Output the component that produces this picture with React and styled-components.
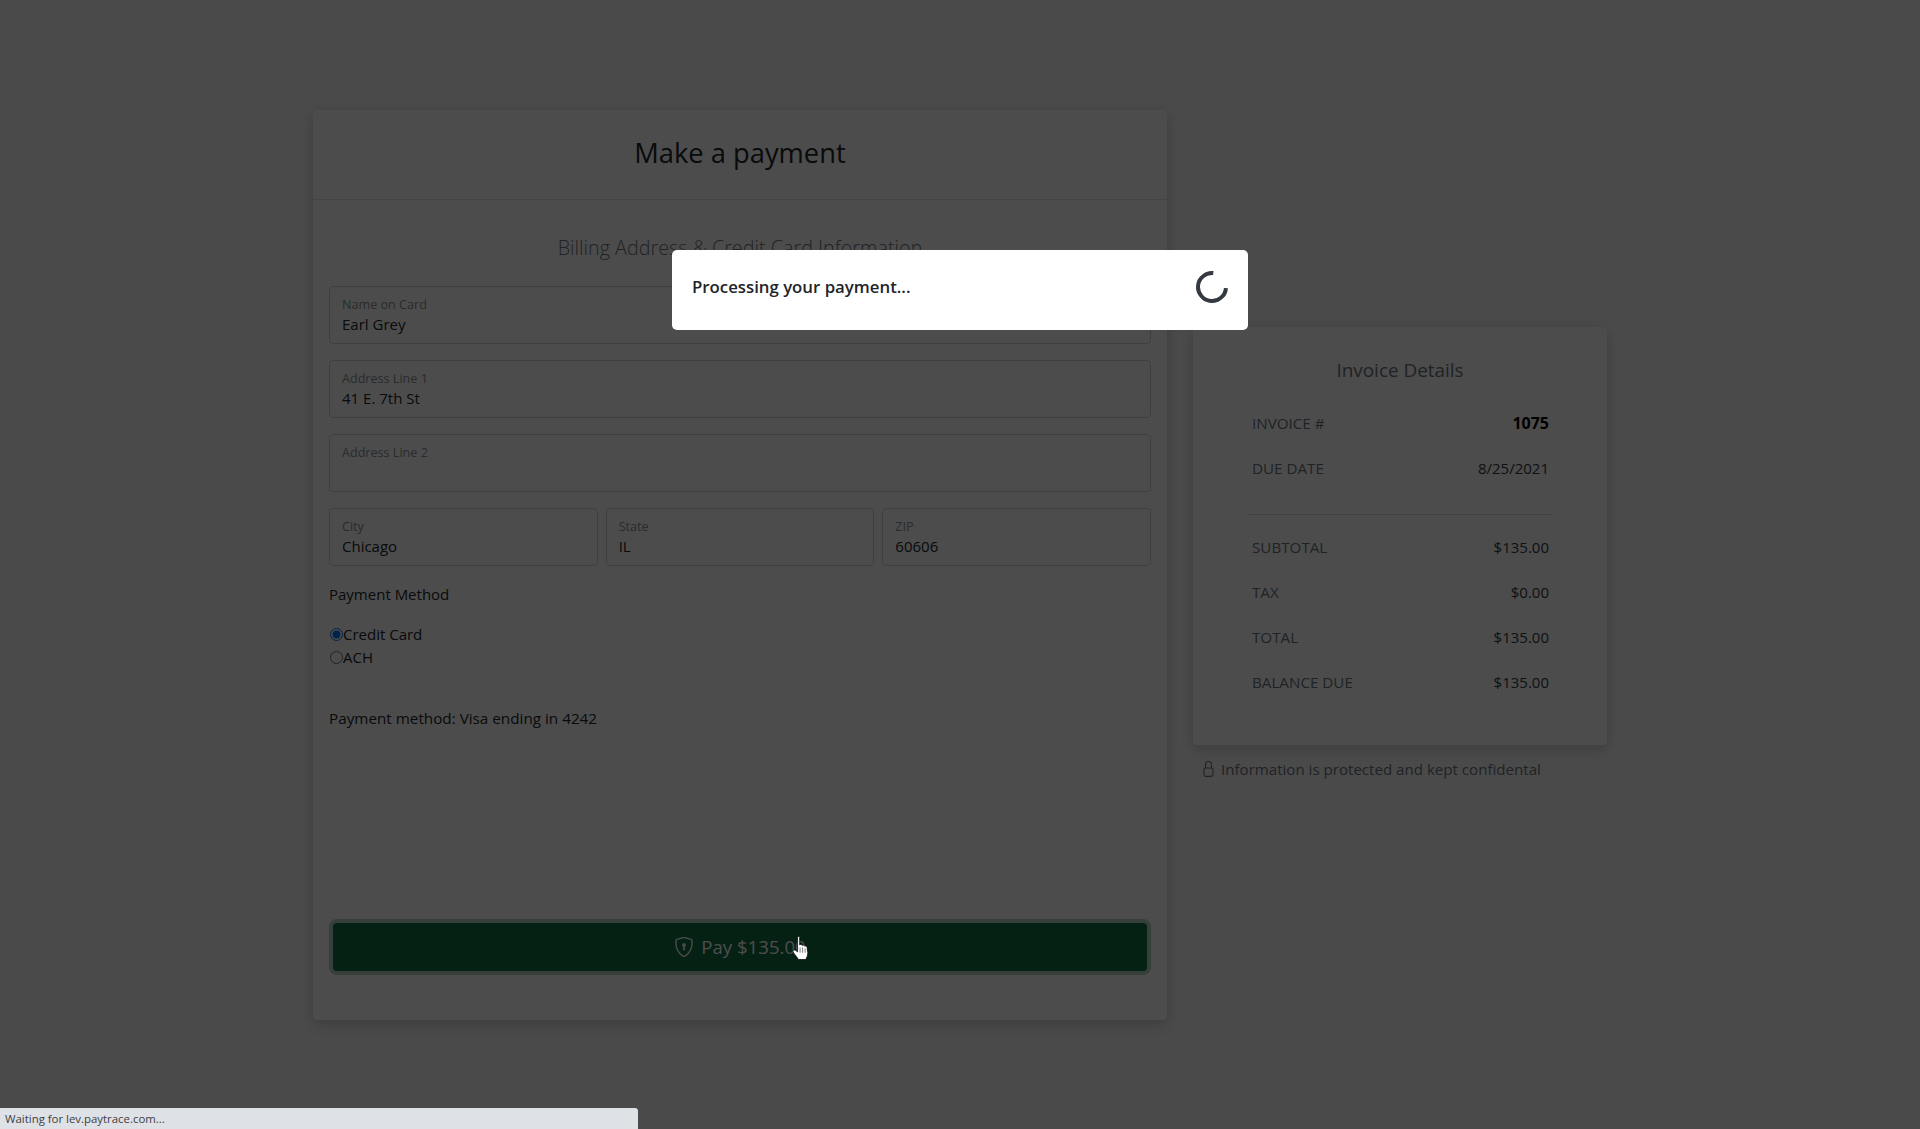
import React from "react";
import styled, { createGlobalStyle } from "styled-components";
import { BsShieldLock } from "react-icons/bs";

const GlobalStyle = createGlobalStyle`
  html, body {
    margin: 0;
    padding: 0;
    background: #f8f9fa;
    color: #212529;
    font-family: "Open Sans", "Liberation Sans", sans-serif;
  }
  * { box-sizing: border-box; }
`;

const LockIcon = () => (
  <svg width="11" height="17" viewBox="0 0 11 17" fill="none" stroke="currentColor" strokeWidth="1.1">
    <path d="M2.5 8V4.5a3 3 0 0 1 6 0V8" />
    <rect x="1" y="8" width="9" height="8.4" rx="1.6" />
  </svg>
);

const HandCursor = () => (
  <svg width="17" height="24" viewBox="0 0 16 23">
    <path
      d="M5.2 1.2C5.2.3 7.2.3 7.2 1.2V8.5C8 7.8 9.4 8 9.6 9c.8-.6 2.2-.3 2.4.8.9-.5 2.2-.1 2.3 1.2l.7 5c0 3-1.2 5-2 6.5H6c-1-2-3-4-5-7-.8-1.5.5-2.7 2-1.9l2.2 1.6z"
      fill="#fff"
      stroke="#000"
      strokeWidth="0.7"
    />
    <path d="M7.6 11v5M10 11v5M12.4 12v4" stroke="#000" strokeWidth="0.5" />
  </svg>
);

const Field = ({ label, value }) => (
  <FieldBox>
    <FieldLabel>{label}</FieldLabel>
    <FieldValue>{value}</FieldValue>
  </FieldBox>
);

const Row = ({ label, value, strong }) => (
  <InvoiceRow>
    <RowLabel>{label}</RowLabel>
    <RowValue $strong={strong}>{value}</RowValue>
  </InvoiceRow>
);

export default function App() {
  return (
    <>
      <GlobalStyle />
      <Page>
        <PaymentCard>
          <CardHeader>
            <Title>Make a payment</Title>
          </CardHeader>
          <CardBody>
            <SubTitle>Billing Address &amp; Credit Card Information</SubTitle>
            <Field label="Name on Card" value="Earl Grey" />
            <Field label="Address Line 1" value="41 E. 7th St" />
            <Field label="Address Line 2" value="" />
            <FieldRow>
              <Field label="City" value="Chicago" />
              <Field label="State" value="IL" />
              <Field label="ZIP" value="60606" />
            </FieldRow>
            <MethodHeading>Payment Method</MethodHeading>
            <RadioList>
              <RadioLabel>
                <RadioInput type="radio" name="method" defaultChecked />
                Credit Card
              </RadioLabel>
              <RadioLabel>
                <RadioInput type="radio" name="method" />
                ACH
              </RadioLabel>
            </RadioList>
            <MethodNote>Payment method: Visa ending in 4242</MethodNote>
            <PayButton type="button">
              <BsShieldLock size={20} />
              Pay $135.00
            </PayButton>
          </CardBody>
        </PaymentCard>

        <SideColumn>
          <InvoiceCard>
            <InvoiceTitle>Invoice Details</InvoiceTitle>
            <Row label="INVOICE #" value="1075" strong />
            <Row label="DUE DATE" value="8/25/2021" />
            <Divider />
            <Row label="SUBTOTAL" value="$135.00" />
            <Row label="TAX" value="$0.00" />
            <Row label="TOTAL" value="$135.00" />
            <Row label="BALANCE DUE" value="$135.00" />
          </InvoiceCard>
          <SecureNote>
            <LockIcon />
            Information is protected and kept confidental
          </SecureNote>
        </SideColumn>
      </Page>

      <Backdrop>
        <Dialog>
          <DialogText>Processing your payment...</DialogText>
          <Spinner />
        </Dialog>
      </Backdrop>

      <CursorSpot>
        <HandCursor />
      </CursorSpot>
      <StatusBar>Waiting for lev.paytrace.com...</StatusBar>
    </>
  );
}

const Page = styled.div`
  display: flex;
  justify-content: center;
  align-items: center;
  gap: 26px;
  height: 1129px;
  overflow: hidden;
`;

const PaymentCard = styled.section`
  width: 854px;
  background: #fff;
  border-radius: 4px;
  box-shadow: 0 0 14px rgba(0, 0, 0, 0.1), 0 8px 16px rgba(0, 0, 0, 0.1);
`;

const CardHeader = styled.header`
  height: 90px;
  padding-bottom: 4px;
  display: flex;
  align-items: center;
  justify-content: center;
  border-bottom: 1px solid #e0e0e0;
`;

const Title = styled.h1`
  margin: 0;
  font-size: 27.3px;
  font-weight: 500;
  color: #212529;
`;

const CardBody = styled.div`
  padding: 33px 16px 49px;
`;

const SubTitle = styled.h2`
  margin: 0 0 23px;
  font-size: 19.8px;
  font-weight: 300;
  line-height: 30px;
  text-align: center;
  color: #6c757d;
`;

const FieldBox = styled.div`
  flex: 1;
  height: 58px;
  margin-bottom: 16px;
  padding: 9px 12px 0;
  border: 1px solid #ced4da;
  border-radius: 4px;
  background: #fff;
`;

const FieldLabel = styled.div`
  font-size: 12.6px;
  line-height: 17px;
  color: #8c9196;
`;

const FieldValue = styled.div`
  height: 22px;
  font-size: 15px;
  line-height: 22px;
  color: #212529;
`;

const FieldRow = styled.div`
  display: flex;
  gap: 8px;
`;

const MethodHeading = styled.div`
  font-size: 15px;
  line-height: 24px;
`;

const RadioList = styled.div`
  margin-top: 17px;
`;

const RadioLabel = styled.label`
  display: flex;
  align-items: center;
  height: 23px;
  font-size: 15px;
`;

const RadioInput = styled.input`
  width: 13px;
  height: 13px;
  margin: 0 0 0 1px;
`;

const MethodNote = styled.p`
  margin: 37px 0 193px;
  font-size: 15.25px;
  line-height: 24px;
`;

const PayButton = styled.button`
  display: flex;
  align-items: center;
  justify-content: center;
  gap: 7px;
  width: calc(100% - 8px);
  height: 48px;
  margin: 0 4px;
  border: 0;
  border-radius: 4px;
  background: #126e43;
  box-shadow: 0 0 0 4px #b6d2c4;
  font-family: inherit;
  font-size: 18.6px;
  color: #fff;
`;

const SideColumn = styled.aside`
  width: 414px;
  padding-bottom: 22px;
`;

const InvoiceCard = styled.section`
  height: 418px;
  padding: 28px 54px 0;
  background: #fff;
  border-radius: 4px;
  box-shadow: 0 0 14px rgba(0, 0, 0, 0.1), 0 8px 16px rgba(0, 0, 0, 0.1);
`;

const InvoiceTitle = styled.h2`
  margin: 0 0 16px;
  font-size: 18.9px;
  font-weight: 400;
  line-height: 30px;
  text-align: center;
  color: #6c757d;
`;

const InvoiceRow = styled.div`
  display: flex;
  align-items: center;
  justify-content: space-between;
  height: 45px;
  padding: 0 4px 0 5px;
`;

const RowLabel = styled.span`
  font-size: 15.2px;
  color: #6c757d;
`;

const RowValue = styled.span`
  font-size: ${(p) => (p.$strong ? "16px" : "15px")};
  font-weight: ${(p) => (p.$strong ? 700 : 400)};
  color: ${(p) => (p.$strong ? "#000" : "#343a40")};
`;

const Divider = styled.hr`
  margin: 23px 0 10px;
  border: 0;
  border-top: 1px solid #dcdcdc;
`;

const SecureNote = styled.div`
  display: flex;
  align-items: center;
  gap: 7px;
  margin-top: 12px;
  padding-left: 10px;
  font-size: 15.1px;
  line-height: 24px;
  color: #6c757d;
`;

const Backdrop = styled.div`
  position: fixed;
  inset: 0;
  display: flex;
  align-items: flex-start;
  justify-content: center;
  padding-top: 250px;
  background: rgba(0, 0, 0, 0.7);
`;

const Dialog = styled.div`
  display: flex;
  align-items: center;
  justify-content: space-between;
  width: 576px;
  height: 80px;
  padding: 0 20px 7px;
  background: #fff;
  border-radius: 5px;
`;

const DialogText = styled.strong`
  font-size: 16.8px;
  font-weight: 600;
  color: #212529;
`;

const Spinner = styled.div`
  width: 32px;
  height: 32px;
  border: 4px solid #343a40;
  border-right-color: transparent;
  border-radius: 50%;
  transform: rotate(-40deg);
`;

const CursorSpot = styled.div`
  position: fixed;
  left: 792px;
  top: 936px;
  line-height: 0;
`;

const StatusBar = styled.div`
  position: fixed;
  left: 0;
  bottom: 0;
  width: 638px;
  height: 21px;
  padding-left: 5px;
  background: #dee1e6;
  border-top-right-radius: 3px;
  font-size: 11.4px;
  line-height: 21px;
  color: #3c4043;
`;
